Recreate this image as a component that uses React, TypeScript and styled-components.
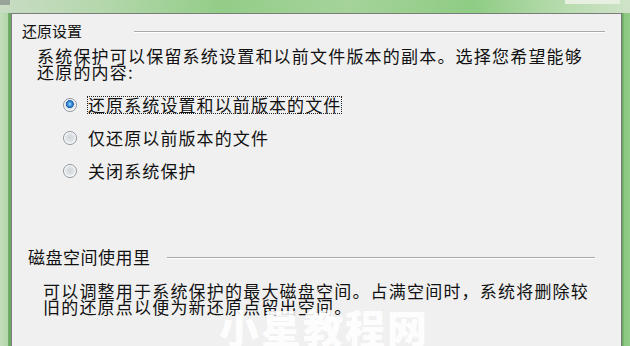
import React from "react";
import styled, { createGlobalStyle } from "styled-components";

const GlobalStyle = createGlobalStyle`
  html, body {
    margin: 0;
    padding: 0;
    background: #f0f0f0;
  }
  body {
    font-family: "Noto Sans CJK SC", "Microsoft YaHei", sans-serif;
    color: #111;
  }
`;

const App: React.FC = () => {
  return (
    <Window>
      <GlobalStyle />
      <TitleBar>
        <TitleIcon />
        <CaptionGlow />
      </TitleBar>
      <Body>
        <Frame side="left" />
        <Panel>
          <GroupHeader>
            <GroupTitle size={15}>还原设置</GroupTitle>
            <Rule gap={52} right={16} />
          </GroupHeader>
          <Paragraph indent={25}>
            系统保护可以保留系统设置和以前文件版本的副本。选择您希望能够
            <br />
            还原的内容:
          </Paragraph>
          <Options>
            <Option>
              <Radio checked />
              <OptionLabel focused>还原系统设置和以前版本的文件</OptionLabel>
            </Option>
            <Option>
              <Radio />
              <OptionLabel>仅还原以前版本的文件</OptionLabel>
            </Option>
            <Option>
              <Radio />
              <OptionLabel>关闭系统保护</OptionLabel>
            </Option>
          </Options>
          <GroupHeader style={{ marginTop: 63, paddingLeft: 6 }}>
            <GroupTitle size={17}>磁盘空间使用里</GroupTitle>
            <Rule gap={16} right={26} />
          </GroupHeader>
          <Paragraph indent={31} style={{ marginTop: 14 }}>
            可以调整用于系统保护的最大磁盘空间。占满空间时，系统将删除较
            <br />
            旧的还原点以便为新还原点留出空间。
          </Paragraph>
          <Watermark>小星教程网</Watermark>
        </Panel>
        <Frame side="right" />
      </Body>
    </Window>
  );
};

const Window = styled.div`
  width: 630px;
  height: 346px;
  display: flex;
  flex-direction: column;
  overflow: hidden;
  background: #f0f0f0;
`;

const TitleBar = styled.div`
  position: relative;
  height: 13px;
  flex: none;
  background: linear-gradient(
    90deg,
    #c9dcc4 0%,
    #b6d8ae 15%,
    #93cd88 35%,
    #a5d39a 55%,
    #8fcc84 75%,
    #b9dcb0 90%,
    #cfe3c8 100%
  );
`;

const TitleIcon = styled.div`
  position: absolute;
  left: 0;
  top: 0;
  width: 10px;
  height: 5px;
  background: #9aa49a;
`;

const CaptionGlow = styled.div`
  position: absolute;
  right: 10px;
  top: 0;
  width: 55px;
  height: 4px;
  background: #e6efe0;
`;

const Body = styled.div`
  flex: 1;
  display: flex;
  min-height: 0;
`;

const Frame = styled.div<{ side: "left" | "right" }>`
  flex: none;
  width: ${(p) => (p.side === "left" ? "11px" : "8px")};
  background: ${(p) =>
    p.side === "left"
      ? "linear-gradient(90deg, #c3ddbb 0%, #b2d6a8 70%, #5f9f55 80%, #74b06a 100%)"
      : "linear-gradient(90deg, #5f9f55 0%, #8cc882 30%, #93cd88 100%)"};
`;

const Panel = styled.div`
  position: relative;
  flex: 1;
  border: 1px solid #7c7c7c;
  border-bottom: none;
  background: #f0f0f0;
  padding: 5px 0 0 10px;
  overflow: hidden;
`;

const GroupHeader = styled.div`
  display: flex;
  align-items: center;
  height: 24px;
`;

const GroupTitle = styled.span<{ size: number }>`
  font-size: ${(p) => p.size}px;
  letter-spacing: ${(p) => (p.size > 15 ? "0.5px" : "0")};
  line-height: 24px;
  white-space: nowrap;
`;

const Rule = styled.div<{ gap: number; right: number }>`
  flex: 1;
  margin-left: ${(p) => p.gap}px;
  margin-right: ${(p) => p.right}px;
  height: 0;
  border-top: 1px solid #a9a9a9;
  border-bottom: 1px solid #ffffff;
  margin-top: 2px;
`;

const Paragraph = styled.p<{ indent: number }>`
  margin: 5px 0 0 ${(p) => p.indent - 10}px;
  font-size: 17px;
  letter-spacing: 1.2px;
  line-height: 16px;
  white-space: nowrap;
`;

const Options = styled.div`
  display: flex;
  flex-direction: column;
  gap: 11px;
  margin: 14px 0 0 41px;
`;

const Option = styled.div`
  display: flex;
  align-items: center;
  height: 22px;
  gap: 10px;
`;

const Radio = styled.span<{ checked?: boolean }>`
  box-sizing: border-box;
  width: 14px;
  height: 14px;
  border-radius: 50%;
  border: 1px solid #8e959e;
  background: ${(p) =>
    p.checked
      ? "radial-gradient(circle at 48% 42%, #a6dcff 0%, #3b93e0 22%, #1c5fa6 40%, #d9e0e8 46%, #f4f6f8 100%)"
      : "radial-gradient(circle at 50% 45%, #cfd5db 0%, #dfe4e8 45%, #f6f7f8 100%)"};
  box-shadow: inset 0 0 0 1px #ffffff;
  flex: none;
`;

const OptionLabel = styled.span<{ focused?: boolean }>`
  font-size: 17px;
  letter-spacing: 1.1px;
  line-height: 18px;
  padding: 0 1px;
  outline: ${(p) => (p.focused ? "1px dotted #222" : "none")};
  outline-offset: -1px;
  white-space: nowrap;
`;

const Watermark = styled.div`
  position: absolute;
  left: 207px;
  top: 293px;
  font-size: 40px;
  font-weight: 900;
  letter-spacing: 2px;
  color: rgba(255, 255, 255, 0.9);
  white-space: nowrap;
  line-height: 1;
`;

export default App;
